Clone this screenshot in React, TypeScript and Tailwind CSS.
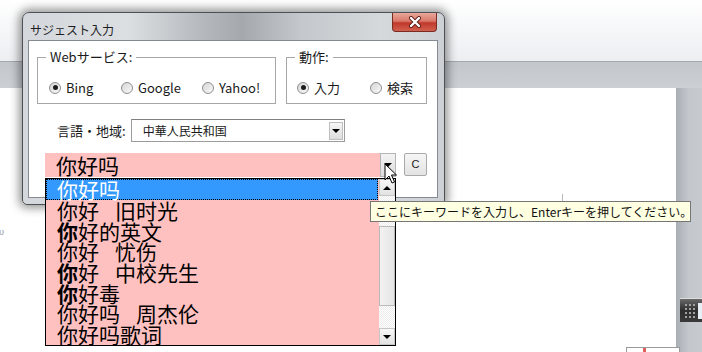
import type { ReactNode } from 'react'

/* ------------------------------------------------------------------ */
/*  Small controls                                                    */
/* ------------------------------------------------------------------ */

function Radio({ label, checked, width }: { label: string; checked?: boolean; width: string }) {
  return (
    <label className={`flex items-center gap-[5px] ${width}`}>
      <span className="w-[12px] h-[12px] rounded-full border border-[#8e8f8f] bg-gradient-to-br from-[#d4d4d4] to-[#fbfbfb] flex items-center justify-center shrink-0">
        {checked && <span className="w-[5px] h-[5px] rounded-full bg-[#1c1c1c]" />}
      </span>
      <span className="leading-[16px]">{label}</span>
    </label>
  )
}

function GroupBox({ title, width, children }: { title: string; width: string; children: ReactNode }) {
  return (
    <div className={`relative h-[47px] border border-[#a7a7a7] ${width} flex items-center pt-[14px]`}>
      <span className="absolute -top-[9px] left-[8px] bg-white px-[4px] leading-[16px]">{title}</span>
      {children}
    </div>
  )
}

function DownArrow() {
  return (
    <span className="w-0 h-0 border-l-[4px] border-r-[4px] border-t-[4px] border-l-transparent border-r-transparent border-t-black" />
  )
}

function ScrollButton({ up }: { up?: boolean }) {
  return (
    <div className="h-[17px] border border-[#c6c6c6] bg-gradient-to-b from-[#f8f8f8] to-[#e2e2e2] flex items-center justify-center">
      {up ? (
        <span className="w-0 h-0 border-l-[4px] border-r-[4px] border-b-[4px] border-l-transparent border-r-transparent border-b-black" />
      ) : (
        <DownArrow />
      )}
    </div>
  )
}

/* ------------------------------------------------------------------ */
/*  Data                                                              */
/* ------------------------------------------------------------------ */

const SUGGESTIONS: { head: string; words: string[]; bold?: boolean }[] = [
  { head: '你', words: ['好', '旧时光'] },
  { head: '你', words: ['好的英文'], bold: true },
  { head: '你', words: ['好', '忧伤'] },
  { head: '你', words: ['好', '中校先生'], bold: true },
  { head: '你', words: ['好毒'], bold: true },
  { head: '你', words: ['好吗', '周杰伦'] },
  { head: '你', words: ['好吗歌词'] },
]

/* ------------------------------------------------------------------ */
/*  App                                                               */
/* ------------------------------------------------------------------ */

export default function App() {
  return (
    <div className="relative w-[702px] h-[352px] overflow-hidden bg-white font-['Noto_Sans_CJK_JP','Liberation_Sans',sans-serif] text-[13px] text-[#1a1a1a] select-none">
      {/* Background application */}
      <div className="flex flex-col h-full">
        <div className="h-[62px] bg-gradient-to-b from-[#ffffff] to-[#eceef1] border-b border-[#a3a9b0]" />
        <div className="h-[26px] bg-gradient-to-b from-[#c3c7cc] to-[#ccd0d5]" />
        <div className="flex flex-1">
          <div className="flex-1 bg-white relative">
            <span className="absolute -left-[1px] top-[137px] text-[9px] text-[#9a9a9a]">υ</span>
            <span className="absolute left-[562px] top-[106px] w-px h-[8px] bg-[#b8b8b8]" />
            <div className="absolute left-[626px] top-[259px] w-[54px] h-[6px] border border-[#9a9a9a] bg-white flex">
              <span className="ml-[16px] w-[3px] h-full bg-[#e06060]" />
            </div>
          </div>
          <div className="w-[26px] bg-gradient-to-r from-[#a9aeb4] via-[#c4c8cd] to-[#c7cbd0] flex flex-col pt-[210px]">
            <div className="ml-[4px] h-[24px] bg-gradient-to-b from-[#6a6a6a] via-[#2e2e2e] to-[#3a3a3a] border-t border-[#dcdcdc] flex items-center pl-[5px]">
              <div className="grid grid-cols-3 gap-[2px]">
                {Array.from({ length: 12 }).map((_, i) => (
                  <span key={i} className="w-[2px] h-[2px] bg-[#a0a0a0]" />
                ))}
              </div>
              <span className="ml-auto w-[4px] h-[16px] bg-[#e8eef5]" />
            </div>
          </div>
        </div>
      </div>

      {/* Dialog window */}
      <div className="absolute left-[22px] top-[12px] w-[423px] h-[193px] rounded-t-[7px] rounded-b-[5px] border border-[#4d5156] shadow-[0_0_10px_3px_rgba(0,0,0,0.42)] bg-[linear-gradient(90deg,#d4d7db_0%,#dcdfe2_25%,#b6babe_42%,#a5a9ad_52%,#c4c7cb_66%,#d6d9dc_85%,#cdd0d4_100%)] flex flex-col">
        {/* Title bar */}
        <div className="h-[27px] flex items-start">
          <span className="pl-[7px] pt-[9px] text-[12px] leading-[16px] text-[#1e1e1e]">サジェスト入力</span>
          <div className="ml-auto mr-[7px] w-[45px] h-[19px] rounded-b-[4px] border border-[#7a2b22] border-t-0 bg-[linear-gradient(180deg,#e9a89c_0%,#d9786a_45%,#c0392b_55%,#d2604f_100%)] flex items-center justify-center">
            <svg width="14" height="12" viewBox="0 0 14 12">
              <path d="M3 2 L11 10 M11 2 L3 10" stroke="#5a1a14" strokeWidth="4" strokeLinecap="round" />
              <path d="M3 2 L11 10 M11 2 L3 10" stroke="#ffffff" strokeWidth="2.4" strokeLinecap="round" />
            </svg>
          </div>
        </div>

        {/* Client area */}
        <div className="ml-[5px] w-[410px] h-[158px] border border-[#838a91] bg-white">
          <div className="mt-[16px] ml-[8px] flex gap-[10px]">
            <GroupBox title="Webサービス:" width="w-[239px]">
              <div className="flex pl-[11px]">
                <Radio label="Bing" checked width="w-[72px]" />
                <Radio label="Google" width="w-[81px]" />
                <Radio label="Yahoo!" width="w-[70px]" />
              </div>
            </GroupBox>
            <GroupBox title="動作:" width="w-[141px]">
              <div className="flex pl-[10px]">
                <Radio label="入力" checked width="w-[73px]" />
                <Radio label="検索" width="w-[50px]" />
              </div>
            </GroupBox>
          </div>

          {/* Language row */}
          <div className="mt-[15px] pl-[28px] flex items-center">
            <span className="leading-[16px]">言語・地域:</span>
            <div className="ml-[5px] w-[214px] h-[23px] border border-[#9c9c9c] border-t-[#7f7f7f] flex items-center">
              <span className="pl-[11px] text-[12px] leading-[16px] flex-1">中華人民共和国</span>
              <div className="mr-[1px] w-[14px] h-[18px] border border-[#bdbdbd] bg-gradient-to-b from-[#f6f6f6] to-[#dedede] flex items-center justify-center">
                <DownArrow />
              </div>
            </div>
          </div>

          {/* Keyword combo */}
          <div className="mt-[11px] pl-[16px] flex items-start">
            <div className="w-[335px] h-[24px] bg-[#ffc0c0] pl-[11px] text-[21px] leading-[24px] font-['Noto_Sans_CJK_SC',sans-serif] text-black">
              你好吗
            </div>
            <div className="w-[16px] h-[24px] border border-[#b5b5b5] bg-gradient-to-b from-[#f4f4f4] to-[#dcdcdc] flex items-center justify-center">
              <DownArrow />
            </div>
            <div className="ml-[8px] w-[23px] h-[23px] border border-[#a9a9a9] rounded-[2px] bg-gradient-to-b from-[#f6f6f6] to-[#e3e3e3] flex items-center justify-center text-[11px] font-['Liberation_Sans',sans-serif]">
              C
            </div>
          </div>
        </div>
      </div>

      {/* Drop-down list */}
      <div className="absolute left-[45px] top-[178px] w-[351px] h-[168px] border border-black bg-[#ffc0c0] flex font-['Noto_Sans_CJK_SC',sans-serif] text-[21px] text-black">
        <div className="flex-1 flex flex-col">
          <div className="h-[21px] mr-[1px] bg-[#3399ff] border border-dotted border-black text-white leading-[19px] pl-[10px]">你好吗</div>
          {SUGGESTIONS.map((s, i) => (
            <div key={i} className="h-[20.7px] leading-[20.7px] pl-[11px] flex items-center whitespace-nowrap">
              <span className={s.bold ? 'font-bold' : ''}>{s.head}</span>
              {s.words.map((w, j) => (
                <span key={j} className="flex">
                  {j > 0 && <span className="inline-block w-[16px]" />}
                  <span>{w}</span>
                </span>
              ))}
            </div>
          ))}
        </div>
        <div className="w-[16px] flex flex-col">
          <ScrollButton up />
          <div className="h-[30px] bg-[repeating-conic-gradient(#ececec_0_25%,#ffffff_0_50%)] bg-[length:2px_2px]" />
          <div className="h-[80px] border border-[#b9b9b9] bg-gradient-to-r from-[#f2f2f2] to-[#e6e6e6]" />
          <div className="flex-1 bg-[repeating-conic-gradient(#ececec_0_25%,#ffffff_0_50%)] bg-[length:2px_2px]" />
          <ScrollButton />
        </div>
      </div>

      {/* Tooltip */}
      <div className="absolute left-[370px] top-[201px] w-[321px] h-[21px] border border-[#767676] bg-[#ffffe1] pl-[4px] text-[12px] leading-[19px] text-[#111] whitespace-nowrap">
        ここにキーワードを入力し、Enterキーを押してください。
      </div>

      {/* Mouse cursor */}
      <svg className="absolute left-[384px] top-[163px]" width="14" height="22" viewBox="0 0 14 22">
        <path d="M1 1 L1 17 L5 13 L8 20 L10.5 19 L7.5 12 L12.5 12 Z" fill="#ffffff" stroke="#000000" strokeWidth="1" strokeLinejoin="round" />
      </svg>
    </div>
  )
}
